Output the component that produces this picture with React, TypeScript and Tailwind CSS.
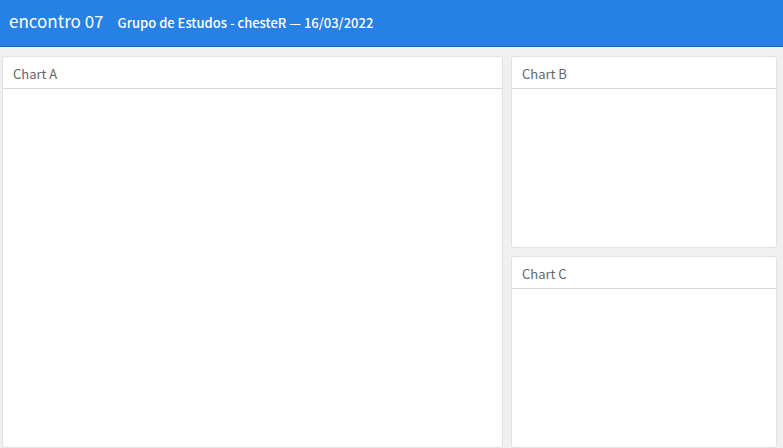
const Card = ({ title }: { title: string }) => (
  <section className="flex min-h-0 min-w-0 flex-col rounded-[3px] border border-[#e2e2e2] bg-white">
    <h2 className="border-b border-[#d6d6d6] px-2.5 pt-[7px] pb-[5px] text-[13px] leading-[19px] text-[#666666]">{title}</h2>
    <div className="flex-1" />
  </section>
);

export default function App() {
  return (
    <div className="flex h-screen flex-col bg-[#f0f0f0] font-['Noto_Sans_CJK_SC',sans-serif]">
      <header className="flex items-baseline gap-3.5 border-b border-[#1967be] bg-[#2780e3] px-[9px] pt-[7px] pb-[9px] text-white">
        <h1 className="text-[17px] leading-7">encontro 07</h1>
        <p className="text-[13px] leading-7 font-medium">Grupo de Estudos - chesteR — 16/03/2022</p>
      </header>
      <main className="grid min-h-0 flex-1 grid-cols-[501fr_266fr] gap-2 pt-[9px] pr-1.5 pl-0.5">
        <Card title="Chart A" />
        <div className="grid min-w-0 grid-rows-2 gap-2">
          <Card title="Chart B" />
          <Card title="Chart C" />
        </div>
      </main>
    </div>
  );
}
